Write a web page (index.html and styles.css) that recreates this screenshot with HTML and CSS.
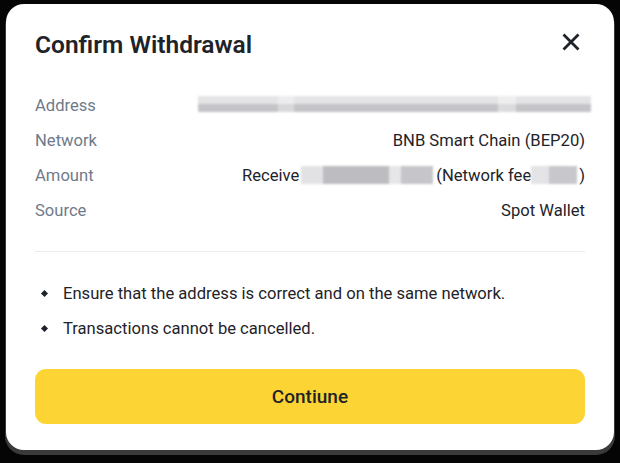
FILE: index.html
```html
<!DOCTYPE html>
<html lang="en">
<head>
   <meta charset="UTF-8">
   <title>Confirm Withdrawal</title>
   <link rel="stylesheet" href="styles.css">
</head>
<body>
   <div class="modal">
       <div class="modal-head">
           <h1>Confirm Withdrawal</h1>
           <svg class="close" width="18" height="18" viewBox="0 0 18 18">
               <path d="M2.5 2.5 L15.5 15.5 M15.5 2.5 L2.5 15.5" stroke="#1e2329" stroke-width="2.8" stroke-linecap="square"/>
           </svg>
       </div>

       <div class="details">
           <div class="row">
               <span class="label">Address</span>
               <span class="blur address"></span>
           </div>
           <div class="row">
               <span class="label">Network</span>
               <span class="value">BNB Smart Chain (BEP20)</span>
           </div>
           <div class="row">
               <span class="label">Amount</span>
               <span class="value">Receive <span class="blur inline amount"></span>(Network fee <span class="blur inline fee"></span>)</span>
           </div>
           <div class="row">
               <span class="label">Source</span>
               <span class="value">Spot Wallet</span>
           </div>
       </div>

       <hr>

       <ul class="notes">
           <li>Ensure that the address is correct and on the same network.</li>
           <li>Transactions cannot be cancelled.</li>
       </ul>

       <button type="button">Contiune</button>
   </div>
</body>
</html>
```

FILE: styles.css
```css
* { margin: 0; padding: 0; box-sizing: border-box; }
html, body {
    width: 100%; height: 100%;
    background: #050505;
    font-family: 'Roboto', 'Liberation Sans', sans-serif;
    color: #1e2329;
}
body { padding: 4px 6px 0 6px; }
.modal {
    width: 608px; height: 446px;
    background: #fff;
    border-radius: 18px;
    box-shadow: 0 4px 0 1px #3a3a3a;
    padding: 25px 29px 0 29px;
    display: flex; flex-direction: column;
}
.modal-head {
    display: flex; align-items: center; justify-content: space-between;
    height: 30px;
}
.modal-head h1 {
    font-size: 24.5px; font-weight: 600;
}
.close { margin-right: 5px; margin-top: -4px; }
.details {
    margin-top: 35px;
    display: flex; flex-direction: column; gap: 13px;
}
.row {
    display: flex; justify-content: space-between; align-items: center;
    height: 22px;
    font-size: 16.6px;
}
.label { color: #707a8a; }
.value { color: #1e2329; display: flex; align-items: center; }
.blur { display: block; filter: blur(1.2px); }
.address {
    width: 393px; height: 22px; margin-right: -6px;
    background:
        linear-gradient(90deg, transparent 0 80px, rgba(255,255,255,.35) 80px 96px, transparent 96px 300px, rgba(255,255,255,.4) 300px 318px, transparent 318px),
        linear-gradient(#fff 2px, #e4e4e6 2px, #e4e4e6 10px, #c4c4c8 10px, #c4c4c8 18px, #fff 18px);
}
.inline { height: 18px; margin: 0 3px 0 2px; }
.amount { width: 132px; background: linear-gradient(90deg, #e2e2e4 0 22px, #bdbdc1 22px 88px, #e6e6e8 88px 100px, #c6c6ca 100px); }
.fee { width: 46px; margin: 0 2px 0 0; background: linear-gradient(90deg, #e4e4e6 0 18px, #c8c8cc 18px); }
hr {
    border: none; border-top: 1px solid #eaecef;
    margin-top: 30px;
}
.notes {
    list-style: none;
    margin-top: 31px;
    display: flex; flex-direction: column; gap: 13px;
}
.notes li {
    position: relative;
    padding-left: 28px;
    font-size: 16.6px; line-height: 22px;
    color: #1e2329;
}
.notes li::before {
    content: "";
    position: absolute; left: 7px; top: 8px;
    width: 5px; height: 5px;
    background: #1e2329;
    transform: rotate(45deg);
}
button {
    margin-top: 29px;
    height: 55px;
    border: none; border-radius: 11px;
    background: #fcd535;
    color: #1e2329;
    font-family: inherit;
    font-size: 19px; font-weight: 500;
}
```
